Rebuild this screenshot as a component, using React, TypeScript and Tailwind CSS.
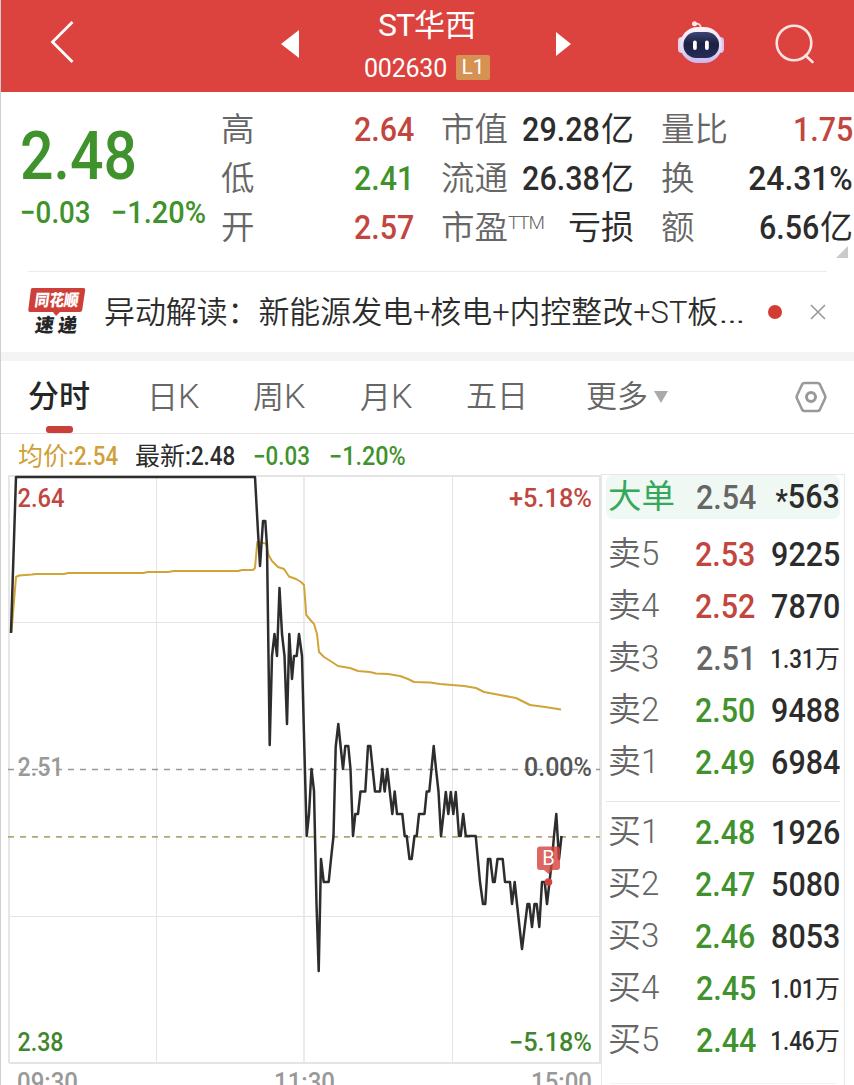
import React from 'react';
import { clsx } from 'clsx';

type Tone = 'up' | 'down' | 'flat' | 'ink';

type Level = {
  label: string;
  price: string;
  volume: string;
  tone: Tone;
};

const toneClass: Record<Tone, string> = {
  up: 'text-[#c2453e]',
  down: 'text-[#3f922c]',
  flat: 'text-[#666666]',
  ink: 'text-[#2c2c2c]',
};

const asks: Level[] = [
  { label: '卖5', price: '2.53', volume: '9225', tone: 'up' },
  { label: '卖4', price: '2.52', volume: '7870', tone: 'up' },
  { label: '卖3', price: '2.51', volume: '1.31万', tone: 'flat' },
  { label: '卖2', price: '2.50', volume: '9488', tone: 'down' },
  { label: '卖1', price: '2.49', volume: '6984', tone: 'down' },
];

const bids: Level[] = [
  { label: '买1', price: '2.48', volume: '1926', tone: 'down' },
  { label: '买2', price: '2.47', volume: '5080', tone: 'down' },
  { label: '买3', price: '2.46', volume: '8053', tone: 'down' },
  { label: '买4', price: '2.45', volume: '1.01万', tone: 'down' },
  { label: '买5', price: '2.44', volume: '1.46万', tone: 'down' },
];

const pricePoints =
  '11,633 16,477 255,477 258,532 260,566 263,521 265.3,521 267,546 269.7,745 272,656 274.5,634 277,656 279.5,588 282,634 284.5,656 287,724 289.3,634 292,679 294,656 296.7,656 299,634 302,656 303.7,724 306.7,836 309,814 311.5,769 314,791 316.5,904 318.7,971 321,859 323.7,882 328.7,882 331,859 333.5,836 335.7,747 338.3,724 340.7,747 343,769 345.3,746 348.3,746 350.5,769 353,836 355.3,814 358,814 360.5,791.5 365.3,791.5 368,746 370.3,746 375,791.5 380,791.5 382.3,769 384.7,791.5 387.3,769 392.3,814 394.7,791.5 397,814 402.3,814 404.7,836 406.7,836 409.5,859 411.7,859 414.5,836 416.7,836 419,814 424.5,814 426.7,791.5 429.3,791.5 431.5,769 433.7,746 436,769 438.5,791.5 441,836 443.5,814 445.8,792 448.3,814 450.8,792 453.3,814 455.8,792 459,836 460.7,836 463.2,814 465.8,836 475.7,836 480,882 483,904 485.3,904 488,859 490.3,859 493,882 494.7,882 497.5,859 502.7,859 505,882 510,882 512,904 514.7,882 517,904 519.5,927 522,949 524.7,927 527.5,904 529.3,904 532,927 534.5,904 536.7,904 539.3,927 542,882 544.7,882 547,904 549.5,882 552,859 554,836 556.3,814 559,859 561.5,836';

const averagePoints =
  '11.5,632 16,577 19,575.5 32,574.5 36,574 64,574 68,573 143,573 148,572 168,572 174,571 238,571 242,570 253,570 255,568 257.3,542 266,543.5 268.5,555 272,561 278,567 284,569 289,576.5 296,579 301,582 304,585 306.3,615 310,619.5 314,624 317,634 319,652 324,657 332,662 338,666 350,668 358,671 370,672 376,673.5 388,674 400,676 408,679 414,682 430,682.5 440,684 464,686 476,688 484,692 500,695 516,698 524,702 530,705 545,707 561,709.5';

function Header() {
  return (
    <header className="flex h-[92px] items-center bg-[#dc423e] text-white">
      <svg className="mb-2 ml-[49px] shrink-0" width="26" height="44" fill="none" stroke="#fff" strokeWidth="2.8">
        <path d="M22.5 2 2.5 22l20 20" />
      </svg>
      <svg className="mb-1 ml-[205px] shrink-0" width="18" height="28" fill="#fff">
        <path d="M0 14 18 0v28z" />
      </svg>
      <div className="ml-[48px] w-40 shrink-0">
        <div className="flex h-[50px] items-center justify-center text-[32px] leading-none">
          <span className="tracking-[-1px]">ST</span>
          <span className="text-[31px]">华西</span>
        </div>
        <div className="flex h-[42px] items-start justify-center pt-[5px]">
          <span className="text-[25px] leading-[27px] tracking-[-0.2px]">002630</span>
          <span className="ml-[9px] h-[25px] w-[34px] rounded-[2px] bg-[#d59252] text-center text-[21px] leading-[25px]">
            L1
          </span>
        </div>
      </div>
      <svg className="mb-1 ml-[49px] shrink-0" width="15" height="24" fill="#fff">
        <path d="M0 0 15 12 0 24z" />
      </svg>
      <RobotIcon />
      <svg className="mb-1 ml-[48px] shrink-0" width="42" height="42" fill="none" stroke="#fde3df" strokeWidth="2.6">
        <circle cx="20" cy="20" r="17.3" />
        <path d="M31.5 32.5 38.500 39" strokeLinecap="round" />
      </svg>
    </header>
  );
}

function RobotIcon() {
  return (
    <svg className="mb-1 ml-[105px] shrink-0" width="50" height="46" viewBox="677 21 50 46">
      <defs>
        <linearGradient id="shell" x1="0" y1="0" x2="0" y2="1">
          <stop offset="0" stopColor="#fff4fa" />
          <stop offset="0.6" stopColor="#ead9f2" />
          <stop offset="1" stopColor="#c9b5f0" />
        </linearGradient>
        <linearGradient id="visor" x1="0" y1="0" x2="0" y2="1">
          <stop offset="0" stopColor="#3d4575" />
          <stop offset="0.45" stopColor="#1b2142" />
          <stop offset="1" stopColor="#252c58" />
        </linearGradient>
      </defs>
      <path d="M695.5 24c4-1 6 .5 6.500 4" fill="none" stroke="#f7d9df" strokeWidth="1.8" />
      <circle cx="695.5" cy="23.800" r="2.500" fill="#fbe9ee" />
      <rect x="679" y="37" width="8" height="16" rx="4" fill="#e7d3ef" />
      <rect x="717.500" y="37" width="7.500" height="16" rx="3.700" fill="#d9c4ef" />
      <rect x="681" y="27" width="42" height="36" rx="18" fill="url(#shell)" />
      <rect x="684.500" y="32" width="35.500" height="26" rx="12.500" fill="url(#visor)" />
      <rect x="694" y="40.500" width="3.800" height="9.500" rx="1.900" fill="#fff" />
      <rect x="706" y="40.500" width="3.800" height="9.500" rx="1.900" fill="#fff" />
    </svg>
  );
}

// Figures are condensed toward the side they are aligned to
function Num({ children, left, className }: { children: React.ReactNode; left?: boolean; className?: string }) {
  const percent = typeof children === 'string' && children.endsWith('%');
  return (
    <span
      className={clsx(
        'inline-block whitespace-nowrap font-medium',
        percent ? 'scale-x-[0.935]' : 'scale-x-[0.895]',
        left ? 'origin-left' : 'origin-right',
        className,
      )}
    >
      {children}
    </span>
  );
}

type StatProps = { label: string; sup?: string; value?: string; unit?: string; tone?: Tone };

function Stat({ label, sup, value, unit, tone = 'ink' }: StatProps) {
  return (
    <div className="flex h-[49px] items-center justify-between">
      <span className="flex text-[33.500px] font-[350] leading-[49px] text-[#666]">
        {label}
        {sup && <span className="-mt-[5px] text-[19px] font-light tracking-[-1.200px]">{sup}</span>}
      </span>
      <span className={clsx('flex text-[34px] leading-[49px]', toneClass[tone])}>
        {value && <Num className={unit && 'mr-px'}>{value}</Num>}
        {unit && <span className="text-[33px]">{unit}</span>}
      </span>
    </div>
  );
}

function Quote() {
  return (
    <section className="relative flex h-[179px] pt-[13px]">
      <div className="w-[220px] shrink-0 pl-[19px] pt-5 text-[#3f922c]">
        <Num left className="block text-[66px] leading-[64px]">2.48</Num>
        <div className="mt-2 flex text-[31px] leading-[32px]">
          <span className="w-[91px]">
            <Num left>−0.03</Num>
          </span>
          <Num left>−1.20%</Num>
        </div>
      </div>
      <div className="w-[193px] shrink-0">
        <Stat label="高" value="2.64" tone="up" />
        <Stat label="低" value="2.41" tone="down" />
        <Stat label="开" value="2.57" tone="up" />
      </div>
      <div className="ml-[27px] w-[193px] shrink-0">
        <Stat label="市值" value="29.28" unit="亿" />
        <Stat label="流通" value="26.38" unit="亿" />
        <Stat label="市盈" sup="TTM" unit="亏损" />
      </div>
      <div className="ml-[27px] w-[192px] shrink-0">
        <Stat label="量比" value="1.75" tone="up" />
        <Stat label="换" value="24.31%" />
        <Stat label="额" value="6.56" unit="亿" />
      </div>
      <svg className="absolute right-1.5 top-[154px]" width="12" height="12" fill="#cacaca">
        <path d="M12 0v12H0z" />
      </svg>
    </section>
  );
}

function ExpressLogo() {
  return (
    <svg className="ml-[27px] shrink-0" width="58" height="48" viewBox="28 288 58 48">
      <path d="M32.500 288h51q2 0 1.700 2l-3 20q-.4 2-2.400 2H60l-4 4-3-4H30q-2 0-1.700-2l2.500-20q.2-2 1.700-2z" fill="#cf3f3a" />
      <g transform="skewX(-8)" fontWeight="900" textAnchor="middle">
        <text x="99" y="306" fontSize="16.500" fill="#fff" textLength="44" lengthAdjust="spacingAndGlyphs">
          同花顺
        </text>
        <text x="102" y="332.500" fontSize="19" fill="#262626" textLength="42" lengthAdjust="spacing">
          速递
        </text>
      </g>
    </svg>
  );
}

function AlertBar() {
  return (
    <section className="relative flex h-[90px] items-center border-b-[9px] border-[#f4f4f4]">
      <div className="absolute left-[27px] right-[27px] top-0 h-px bg-[#ebebeb]" />
      <ExpressLogo />
      <p className="ml-[18px] mt-[2px] w-[644px] whitespace-nowrap text-[30.9px] font-[350] leading-[60px] text-[#2c2c2c]">
        异动解读：新能源发电+核电+内控整改+ST板
        <span className="inline-block origin-left scale-x-[1.400]">…</span>
      </p>
      <div className="ml-5 size-3.5 shrink-0 rounded-full bg-[#d43c33]" />
      <svg className="ml-[28px] shrink-0" width="16" height="16" stroke="#999" strokeWidth="1.6">
        <path d="M1 1l14 14M15 1 1 15" />
      </svg>
    </section>
  );
}

function Tabs() {
  return (
    <nav className="flex h-[73px] items-center border-b border-[#e5e5e5] text-[31px] font-[350] leading-[74px] text-[#666]">
      <span className="relative ml-[27px] w-[119px] font-medium text-[#262626]">
        分时
        <i className="absolute bottom-px left-[18px] h-[7px] w-[27px] rounded-[3px] bg-[#cb3f3a]" />
      </span>
      <span className="w-[106px]">日<K /></span>
      <span className="w-[107px]">周<K /></span>
      <span className="w-[106px]">月<K /></span>
      <span className="w-[120px]">五日</span>
      <span className="flex w-[209px] items-center">
        更多
        <svg className="ml-[6px]" width="14" height="12" fill="#aaa">
          <path d="M0 0h14L7 12z" />
        </svg>
      </span>
      <svg className="shrink-0" width="32" height="32" fill="none" stroke="#999" strokeWidth="3">
        <path d="M9.500 2h13q1.500 0 2.300 1.300l5 10.700q1 2 0 4l-5 10.700q-.8 1.300-2.300 1.300h-13q-1.500 0-2.300-1.300l-5-10.700q-1-2 0-4l5-10.700Q8 2 9.500 2z" strokeWidth="2.600" />
        <circle cx="16" cy="16" r="4.500" />
      </svg>
    </nav>
  );
}

function K() {
  return <span className="text-[34px] font-light">K</span>;
}

function ChartLabel({ x, y, width, fill, children }: { x: number; y: number; width: number; fill: string; children: string }) {
  return (
    <text x={x} y={y} fill={fill} fontSize="25" fontWeight="500" textLength={width} lengthAdjust="spacingAndGlyphs">
      {children}
    </text>
  );
}

function MinuteChart() {
  return (
    <svg className="block shrink-0" width="600" height="610" viewBox="1 475 600 610">
      <g stroke="#e4e4e4" fill="none">
        <path d="M156.500 476v587M452.500 476v587M9 622.500h592M9 916.500h592" />
        <path d="M304 476v587" strokeWidth="1.500" />
        <path d="M9 476h592M9 475v588M9 1063h592" strokeWidth="1.800" />
        <path d="M600 475v588" strokeWidth="2" />
      </g>
      <path d="M8 769.500h592" stroke="#999" strokeWidth="1.500" strokeDasharray="6 6" />
      <path d="M8 836.800h592" stroke="#b3a676" strokeWidth="1.700" strokeDasharray="6 6" />
      <polyline points={averagePoints} fill="none" stroke="#d0a437" strokeWidth="2" strokeLinejoin="round" />
      <polyline points={pricePoints} fill="none" stroke="#2d2d2d" strokeWidth="2.500" strokeLinejoin="round" />
      <ChartLabel x={17.500} y={507} width={47} fill="#bf4740">2.64</ChartLabel>
      <ChartLabel x={509} y={507} width={83} fill="#bf4740">+5.18%</ChartLabel>
      <ChartLabel x={17.500} y={776} width={46} fill="#999">2.51</ChartLabel>
      <ChartLabel x={524} y={776} width={68} fill="#555">0.00%</ChartLabel>
      <ChartLabel x={17.500} y={1051} width={46} fill="#3f862c">2.38</ChartLabel>
      <ChartLabel x={509} y={1051} width={83} fill="#3f862c">−5.18%</ChartLabel>
      <ChartLabel x={17} y={1091} width={61} fill="#999">09:30</ChartLabel>
      <ChartLabel x={274} y={1091} width={61} fill="#999">11:30</ChartLabel>
      <ChartLabel x={531} y={1091} width={61} fill="#999">15:00</ChartLabel>
      <g fill="#d5423c">
        <path d="M540 846.500h17q3 0 3 3v17.500q0 3-3 3h-4l-4.500 4-4.500-4h-4q-3 0-3-3v-17.500q0-3 3-3z" opacity="0.800" />
        <circle cx="548.500" cy="882" r="3.800" />
      </g>
      <text x="548.500" y="865" fill="#fff" fontSize="20" textAnchor="middle">B</text>
    </svg>
  );
}

function LevelRow({ level }: { level: Level }) {
  return (
    <div className="flex h-[52px] items-center leading-[52px]">
      <span className="w-[88px] text-[33px] font-[350] text-[#666]">{level.label}</span>
      <Num left className={clsx('text-[34px]', toneClass[level.tone])}>
        {level.price}
      </Num>
      {level.volume.endsWith('万') ? (
        <span className="ml-auto flex pt-1 text-[25px] text-[#2c2c2c]">
          <Num>{level.volume.slice(0, -1)}</Num>万
        </span>
      ) : (
        <Num className="ml-auto text-[34px] text-[#2c2c2c]">{level.volume}</Num>
      )}
    </div>
  );
}

function OrderBook() {
  return (
    <aside className="-mt-px h-[611px] w-[244px] border-x border-t border-[#e8e8e8] px-1">
      <div className="flex h-[44px] items-center rounded-[7px] bg-[#eff8f3] pl-[2px] leading-[44px]">
        <span className="w-[88px] text-[33.500px] text-[#36a85c]">大单</span>
        <Num left className="text-[34px] text-[#666]">2.54</Num>
        <Num className="ml-auto text-[34px] text-[#2c2c2c]">
          <span className="relative top-[3px] text-[31px]">*</span>563
        </Num>
      </div>
      <div className="mt-[9px] pl-[2px]">
        {asks.map((level) => (
          <LevelRow key={level.label} level={level} />
        ))}
      </div>
      <div className="mb-1 mt-[13px] h-px bg-[#e8e8e8]" />
      <div className="pl-[2px]">
        {bids.map((level) => (
          <LevelRow key={level.label} level={level} />
        ))}
      </div>
      <div className="mx-1 mt-[17px] h-px bg-[#fbeeec]" />
    </aside>
  );
}

export default function App() {
  return (
    <div className="relative h-[1085px] w-[854px] overflow-hidden border-l border-[#cfcfcf] bg-white font-['Roboto','Noto_Sans_CJK_SC',sans-serif]">
      <Header />
      <Quote />
      <AlertBar />
      <Tabs />
      <div className="flex h-[41px] whitespace-nowrap pl-[17px] pt-[3px] text-[25px] leading-[40px] text-[#3f922c]">
        <span className="flex w-[117px] text-[#d0a03a]">
          均价<Num left>:2.54</Num>
        </span>
        <span className="flex w-[118px] text-[#2c2c2c]">
          最新<Num left>:2.48</Num>
        </span>
        <span className="w-[76px]">
          <Num left>−0.03</Num>
        </span>
        <Num left>−1.20%</Num>
      </div>
      <main className="flex">
        <MinuteChart />
        <OrderBook />
      </main>
    </div>
  );
}
